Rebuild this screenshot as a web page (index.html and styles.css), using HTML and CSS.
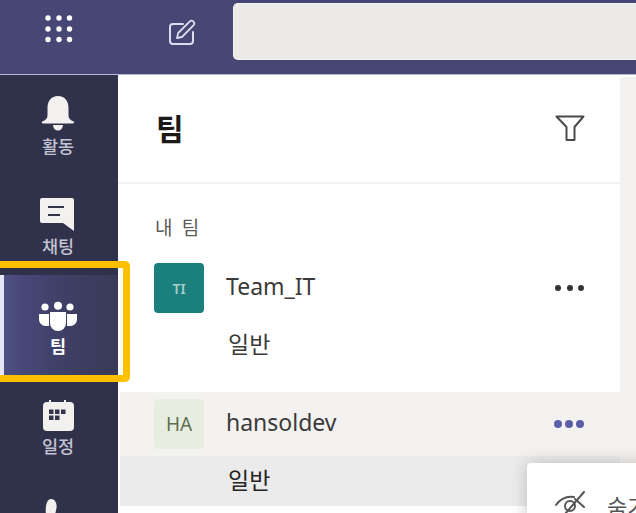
FILE: index.html
```html
<!DOCTYPE html>
<html lang="ko">
<head>
<meta charset="utf-8">
<title>Teams</title>
<link rel="stylesheet" href="styles.css">
</head>
<body>
<div class="app">
  <header class="topbar">
    <svg class="grid-icon" width="30" height="30" viewBox="0 0 30 30"><g fill="#fff"><circle cx="4" cy="4" r="2.700"/><circle cx="15" cy="4" r="2.700"/><circle cx="25.500" cy="4" r="2.700"/><circle cx="4" cy="15" r="2.700"/><circle cx="15" cy="15" r="2.700"/><circle cx="25.500" cy="15" r="2.700"/><circle cx="4" cy="25.500" r="2.700"/><circle cx="15" cy="25.500" r="2.700"/><circle cx="25.500" cy="25.500" r="2.700"/></g></svg>
    <svg class="compose-icon" width="28" height="28" viewBox="0 0 28 28" fill="none" stroke="#dcdcee" stroke-width="2" stroke-linejoin="round" stroke-linecap="round"><path d="M15 6H5a3 3 0 0 0-3 3v14a3 3 0 0 0 3 3h17a3 3 0 0 0 3-3V14"/><path stroke-width="1.800" d="M9 20l1.200-5L21.600 3.600a2.600 2.600 0 0 1 3.800 3.800L14 19z"/></svg>
    <div class="search"></div>
  </header>
  <div class="main">
    <nav class="rail">
      <div class="rail-item">
        <svg class="rail-icon" width="40" height="36" viewBox="0 0 40 36" fill="#f2f1f0"><path d="M20 1C13 1 9.500 6 9.500 13v7c0 4-3 6-5.500 6.500Q3 28 5 28.500h30Q37 28 36 26.500C33.500 26 30.500 24 30.500 20v-7C30.500 6 27 1 20 1z"/><path d="M15 30h10a5 5.500 0 0 1-10 0z"/></svg>
        <span class="rail-label">활동</span>
      </div>
      <div class="rail-item">
        <svg class="rail-icon" width="40" height="36" viewBox="0 0 40 36"><path fill="#f2f1f0" d="M4 3h30a2 2 0 0 1 2 2v31L25 28H4a2 2 0 0 1-2-2V5a2 2 0 0 1 2-2z"/><path stroke="#33344a" stroke-width="2" d="M10 12h16M10 20h12"/></svg>
        <span class="rail-label">채팅</span>
      </div>
      <div class="rail-item rail-item-active">
        <svg class="rail-icon" width="40" height="36" viewBox="0 0 40 36" fill="#fff"><circle cx="7" cy="12" r="3.600"/><circle cx="20" cy="10.800" r="4"/><circle cx="32" cy="12" r="3.600"/><path d="M12 17h16v11a8 8 0 0 1-16 0z"/><path d="M1 19h10v12H7.500A6.500 6.500 0 0 1 1 24.500zM39 19H29v12h3.500A6.500 6.500 0 0 0 39 24.500z"/></svg>
        <span class="rail-label">팀</span>
      </div>
      <div class="rail-item">
        <svg class="rail-icon" width="40" height="36" viewBox="0 0 40 36"><path fill="#f2f1f0" d="M9 7h2V5h2v2h13V5h2v2h4a4 4 0 0 1 4 4v21a4 4 0 0 1-4 4H9a4 4 0 0 1-4-4V11a4 4 0 0 1 4-4z"/><path fill="#33344a" d="M11 14.500h4.500v4.500H11zM17 14.500h4.500v4.500H17zM23 14.500h4.500v4.500H23zM11 20.500h4.500v4.500H11zM17 20.500h4.500v4.500H17z"/></svg>
        <span class="rail-label">일정</span>
      </div>
      <div class="rail-item">
        <svg class="rail-icon" width="40" height="36" viewBox="0 0 40 36" fill="#f2f1f0"><path d="M8 20C7 10 9 4 13 4c4 0 6 4 5.500 9L17 20z"/></svg>
      </div>
    </nav>
    <section class="panel">
      <div class="panel-header">
        <h1 class="panel-title">팀</h1>
        <svg class="filter-icon" width="30" height="27" viewBox="0 0 30 27" fill="none" stroke="#4a4a4a" stroke-width="2" stroke-linejoin="round"><path d="M1.500 1.500h27L19.500 12v13h-8V12z"/></svg>
      </div>
      <div class="section-label">내 팀</div>
      <div class="team-row">
        <div class="avatar avatar-teal">TI</div>
        <span class="team-name">Team_IT</span>
        <div class="more"><i></i><i></i><i></i></div>
      </div>
      <div class="channel-row channel-spaced">일반</div>
      <div class="team-row team-row-hover">
        <div class="avatar avatar-sage">HA</div>
        <span class="team-name">hansoldev</span>
        <div class="more more-active"><i></i><i></i><i></i></div>
      </div>
      <div class="channel-row channel-selected">일반</div>
    </section>
    <div class="gutter"></div>
  </div>
  <div class="highlight"></div>
  <div class="popup">
    <svg class="popup-icon" width="32" height="26" viewBox="0 0 32 26" fill="none" stroke="#555" stroke-width="2" stroke-linecap="round"><path d="M2 15C7 8 13 6 20 7"/><path d="M30 2L11 24"/><path d="M21 9l9 8"/><circle cx="16" cy="16" r="5"/></svg>
    <span class="popup-text">숨기기</span>
  </div>
</div>
</body>
</html>
```

FILE: styles.css
```css
* { box-sizing: border-box; }
html, body { margin: 0; height: 100%; overflow: hidden; background: #fff; }
body { font-family: "Noto Sans", "Noto Sans CJK KR", sans-serif; color: #252423; }

.app { position: relative; width: 636px; height: 513px; overflow: hidden; display: flex; flex-direction: column; }

.topbar { flex: none; height: 75px; background: #464775; border-bottom: 1px solid #b9b9d3; display: flex; align-items: flex-start; }
.grid-icon { margin: 14px 0 0 44px; }
.compose-icon { margin: 18px 0 0 94px; }
.search { flex: 1; height: 57px; margin: 3px 0 0 37px; background: #ebeae8; border: 1px solid #f4f3f1; border-right: 0; border-radius: 5px 0 0 5px; }

.main { flex: 1; min-height: 0; display: flex; overflow: hidden; }

.rail { flex: none; width: 118px; background: #30314a; overflow: hidden; }
.rail-item { height: 100px; padding: 20px 2px 0 0; display: flex; flex-direction: column; align-items: center; gap: 5px; }
.rail-icon { flex: none; display: block; }
.rail-label { font-size: 17.500px; line-height: 20px; font-weight: 500; color: #c3c3d3; }
.rail-item-active { background: linear-gradient(90deg, #4f5183 0, #474879 15%, #3d3e62 60%, #3a3a58 100%); border-left: 4px solid #e6e6f8; padding-right: 6px; }
.rail-item-active .rail-label { color: #fff; font-weight: 700; }

.panel { flex: none; width: 502px; padding-left: 2px; background: #fff; }
.panel-header { height: 109px; margin-left: -2px; border-bottom: 2px solid #f3f2f1; padding: 39px 35px 0 38px; display: flex; justify-content: space-between; align-items: flex-start; }
.panel-title { margin: 0; font-family: "Noto Sans CJK KR", sans-serif; font-size: 30px; line-height: 27px; font-weight: 700; color: #1b1a19; }
.filter-icon { display: block; margin-top: 1px; }

.section-label { padding: 30px 0 0 35px; height: 72px; line-height: 26px; font-family: "Noto Sans CJK KR", sans-serif; font-size: 19px; color: #5c5b5a; letter-spacing: 2px; }

.team-row { height: 64px; padding: 0 36px 0 34px; display: flex; align-items: center; }
.team-row-hover { background: #f3f2f1; }
.avatar { flex: none; width: 50px; height: 50px; border-radius: 4px; display: flex; align-items: center; justify-content: center; }
.avatar-teal { background: #1b7f7e; color: #a5cfcd; font-size: 14px; font-weight: 600; }
.avatar-sage { background: #e7eee0; color: #5f6f52; font-size: 19px; }
.team-name { margin: -4px 0 0 22px; flex: 1; font-size: 23px; color: #3b3a39; }

.more { display: flex; gap: 5.500px; }
.more i { display: block; width: 6px; height: 6px; border-radius: 50%; background: #333; }
.more-active { gap: 3px; }
.more-active i { width: 8px; height: 8px; background: #5b5fa8; }

.channel-row { height: 50px; line-height: 47px; padding-left: 108px; font-family: "Noto Sans CJK KR", sans-serif; font-size: 23px; color: #3b3a39; }
.channel-spaced { margin-bottom: 22px; }
.channel-selected { background: #ebebeb; color: #252423; }

.gutter { flex: 1; margin-top: 2px; background: #f3f2f1; }

.highlight { position: absolute; left: -10px; top: 261px; width: 140px; height: 121px; border: 7px solid #ffc000; border-radius: 5px; }

.popup { position: absolute; left: 527px; top: 463px; width: 200px; height: 90px; background: #fff; border-radius: 4px; box-shadow: 0 0 18px rgba(0, 0, 0, .2); padding: 27px 0 0 27px; display: flex; align-items: flex-start; gap: 21px; }
.popup-icon { flex: none; }
.popup-text { font-family: "Noto Sans CJK KR", sans-serif; font-size: 22px; line-height: 30px; color: #555; }
```
